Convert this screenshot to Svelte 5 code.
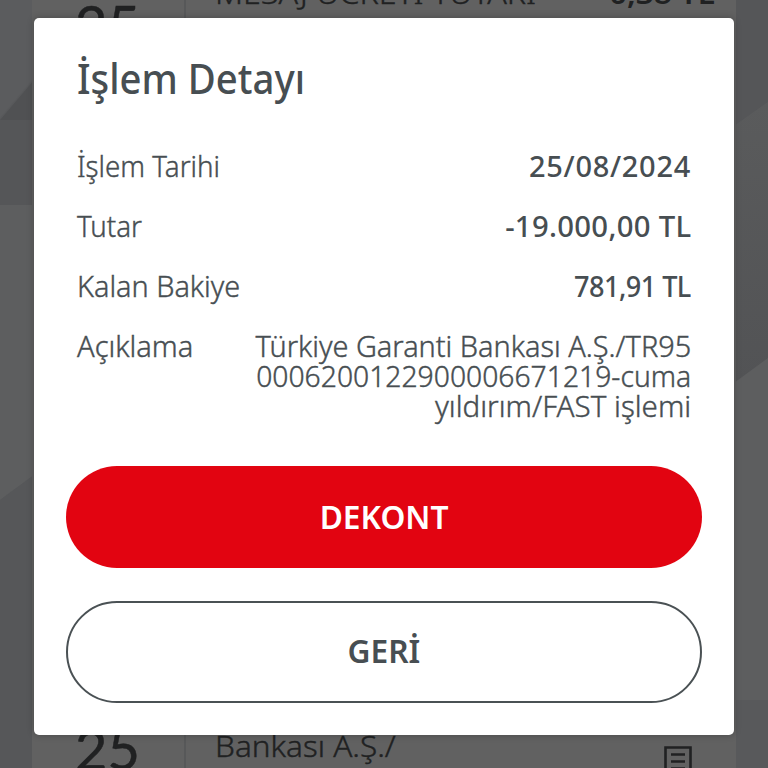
<script>
  const rows = [
    { label: 'İşlem Tarihi', value: '25/08/2024', labelFit: 0.955, valueFit: 1, spacing: 0.7 },
    { label: 'Tutar', value: '-19.000,00 TL', labelFit: 0.955, valueFit: 1.01, spacing: 0.3 },
    { label: 'Kalan Bakiye', value: '781,91 TL', labelFit: 0.993, valueFit: 0.935, spacing: -0.6 },
  ];
  const description = [
    { text: 'Türkiye Garanti Bankası A.Ş./TR95', fit: 0.995 },
    { text: '0006200122900006671219-cuma', fit: 0.975 },
    { text: 'yıldırım/FAST işlemi', fit: 1.018 },
  ];
</script>

<div class="screen">
  <svg class="pattern" viewBox="0 0 768 768" aria-hidden="true">
    <rect width="768" height="768" fill="#58595b" />
    <path d="M0 0H34V78L0 118Z" fill="#5b5c5e" />
    <path d="M34 80L0 120H34Z" fill="#505153" />
    <path d="M0 120H34V205H0Z" fill="#555658" />
    <path d="M0 205H34V475L0 500Z" fill="#5d5e5f" />
    <path d="M34 475L0 500V768H34Z" fill="#565759" />
    <path d="M734 0H768V102L734 126Z" fill="#555658" />
    <path d="M768 102L734 126V383L768 358Z" fill="url(#fade)" />
    <path d="M768 358L734 383V768H768Z" fill="#5d5e5f" />
    <path d="M734 700H768V768H734Z" fill="#58595b" />
    <defs>
      <linearGradient id="fade" x1="0" y1="0" x2="0" y2="1">
        <stop offset="0" stop-color="#5a5b5c" />
        <stop offset="1" stop-color="#525355" />
      </linearGradient>
    </defs>
  </svg>

  <main class="statement">
    <section class="entry first">
      <div class="day">25</div>
      <div class="info"><span class="name fee">MESAJ ÜCRETİ TUTARI</span><b>0,38 TL</b></div>
    </section>
    <section class="entry last">
      <div class="day">25</div>
      <div class="info">
        <span class="name bank">Bankası A.Ş./</span>
        <svg class="doc" viewBox="0 0 28 36" aria-hidden="true">
          <path d="M1.5 1.5H26.5V34H1.5Z M7 8.5H21 M7 15.5H21 M7 22.5H21" fill="none" stroke="#202122" stroke-width="2.6" />
        </svg>
      </div>
    </section>
  </main>

  <div class="overlay">
    <div class="dialog" role="dialog" aria-labelledby="title">
      <h1 id="title">İşlem Detayı</h1>
      <dl>
        {#each rows as row}
          <div class="row">
            <dt style:transform="scaleX({row.labelFit})">{row.label}</dt>
            <dd class="strong" style:letter-spacing="{row.spacing}px" style:transform="scaleX({row.valueFit})">{row.value}</dd>
          </div>
        {/each}
        <div class="row">
          <dt>Açıklama</dt>
          <dd>
            {#each description as line}
              <span class="line" style:transform="scaleX({line.fit})">{line.text}</span>
            {/each}
          </dd>
        </div>
      </dl>
      <div class="actions">
        <button class="primary"><span>DEKONT</span></button>
        <button class="secondary"><span>GERİ</span></button>
      </div>
    </div>
  </div>
</div>

<style>
  :global(body) { margin: 0; overflow: hidden; }
  .screen {
    position: relative;
    width: 768px;
    height: 768px;
    overflow: hidden;
    background: #58595b;
    color: #474e52;
    font-family: 'Noto Sans', 'Open Sans', sans-serif;
    font-size: 29px;
  }
  .pattern { position: absolute; inset: 0; width: 768px; height: 768px; }
  .statement {
    position: relative;
    display: flex;
    flex-direction: column;
    justify-content: space-between;
    box-sizing: border-box;
    width: 704px;
    height: 768px;
    margin: 0 auto;
    overflow: hidden;
    background: #616161;
    color: #202122;
  }
  .entry { display: flex; height: 40px; }
  .day {
    box-sizing: border-box;
    width: 154px;
    padding-left: 43px;
    border-right: 2px solid #575859;
    font-family: Lato, sans-serif;
    font-size: 56px;
    line-height: 40px;
    -webkit-text-stroke: 0.5px currentColor;
  }
  .first .day { padding-top: 5px; }
  .last .day { padding-top: 1px; }
  .info { display: flex; flex: 1; justify-content: space-between; padding: 0 21px 0 29px; line-height: 40px; }
  .first .info { margin-top: -27px; }
  .last .info { padding-right: 44px; }
  .info b { font-weight: 600; transform: scaleX(1.08); transform-origin: right; }
  .name { font-weight: 300; transform-origin: left; -webkit-text-stroke: 0.4px currentColor; }
  .fee { transform: scaleX(1.11); }
  .bank { margin-top: -2px; transform: scaleX(1.085); }
  .doc { width: 28px; height: 36px; margin-top: 18px; flex: none; }

  .overlay {
    position: absolute;
    inset: 0;
    display: flex;
    justify-content: center;
    align-items: flex-start;
    padding-top: 18px;
  }
  .dialog {
    display: flex;
    flex-direction: column;
    box-sizing: border-box;
    width: 700px;
    height: 717px;
    padding: 30px 32px 32px;
    border-radius: 5px;
    background: #fff;
    box-shadow: 0 0 7px rgba(0, 0, 0, 0.25);
  }
  h1 {
    margin: 0 0 43px 11px;
    font-size: 41px;
    font-weight: 500;
    line-height: 60px;
    white-space: nowrap;
    transform: scaleX(0.935);
    transform-origin: left;
  }
  dl { display: flex; flex-direction: column; gap: 30px; margin: 0 11px 0; }
  .row { display: flex; justify-content: space-between; line-height: 30px; white-space: nowrap; }
  dt, dd { margin: 0; font-weight: 300; -webkit-text-stroke: 0.4px currentColor; }
  dt { transform-origin: left; }
  dd { text-align: right; transform-origin: right; }
  .strong { font-weight: 500; -webkit-text-stroke: 0; }
  .line { display: block; transform-origin: right; }
  .actions { display: flex; flex-direction: column; gap: 33px; margin-top: auto; }
  button {
    height: 102px;
    border-radius: 51px;
    font: 600 33px/1 'Noto Sans', sans-serif;
    padding: 0 0 1px;
  }
  button span { display: inline-block; transform: scaleX(0.96); }
  .primary { border: 0; background: #e20411; color: #fff; }
  .secondary { border: 2px solid #4a5154; background: #fff; color: #474e52; padding-bottom: 3px; }
</style>
